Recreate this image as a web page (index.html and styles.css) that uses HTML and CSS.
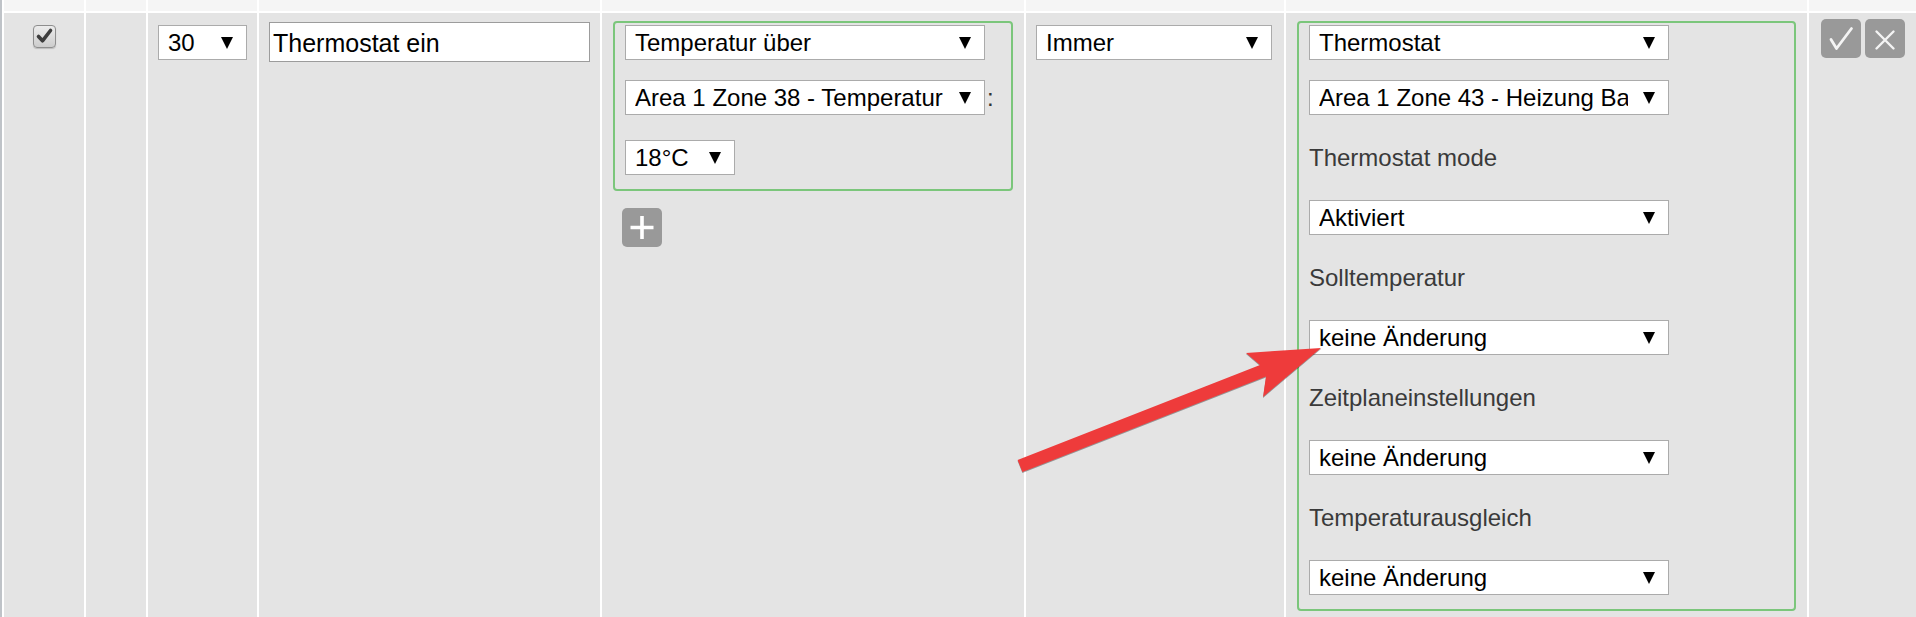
FILE: index.html
```html
<!DOCTYPE html>
<html lang="de">
<head>
<meta charset="utf-8">
<title>Regel bearbeiten</title>
<link rel="stylesheet" href="styles.css">
</head>
<body>
<div class="grid">
  <div class="hcell"></div>
  <div class="hcell"></div>
  <div class="hcell"></div>
  <div class="hcell"></div>
  <div class="hcell"></div>
  <div class="hcell"></div>
  <div class="hcell"></div>
  <div class="hcell"></div>

  <div class="cell cell-check">
    <span class="checkbox">
      <svg width="23" height="23" viewBox="0 0 23 23"><path d="M5.5 11.5 L9.5 15.8 L17.5 5.5" fill="none" stroke="#3d3d3d" stroke-width="3.6" stroke-linecap="round" stroke-linejoin="round"/></svg>
    </span>
  </div>
  <div class="cell"></div>
  <div class="cell cell-pad">
    <div class="select"><span class="val">30</span><span class="caret"></span></div>
  </div>
  <div class="cell cell-input">
    <input class="textin" type="text" value="Thermostat ein">
  </div>
  <div class="cell cell-box">
    <div class="box">
      <div class="select w360"><span class="val">Temperatur über</span><span class="caret"></span></div>
      <div class="line gap20">
        <div class="select w360"><span class="val">Area 1 Zone 38 - Temperatur</span><span class="caret"></span></div>
        <span class="colon">:</span>
      </div>
      <div class="select w110 gap25"><span class="val">18°C</span><span class="caret"></span></div>
    </div>
    <button class="btn plus" type="button">
      <svg width="40" height="39" viewBox="0 0 40 39"><path d="M20 8 V31 M8.5 19.5 H31.5" stroke="#fff" stroke-width="3.6"/></svg>
    </button>
  </div>
  <div class="cell cell-pad cell-when">
    <div class="select"><span class="val">Immer</span><span class="caret"></span></div>
  </div>
  <div class="cell cell-box">
    <div class="box">
      <div class="select w360"><span class="val">Thermostat</span><span class="caret"></span></div>
      <div class="select w360 gap20"><span class="val">Area 1 Zone 43 - Heizung Bad</span><span class="caret"></span></div>
      <div class="label">Thermostat mode</div>
      <div class="select w360"><span class="val">Aktiviert</span><span class="caret"></span></div>
      <div class="label">Solltemperatur</div>
      <div class="select w360"><span class="val">keine Änderung</span><span class="caret"></span></div>
      <div class="label">Zeitplaneinstellungen</div>
      <div class="select w360"><span class="val">keine Änderung</span><span class="caret"></span></div>
      <div class="label">Temperaturausgleich</div>
      <div class="select w360"><span class="val">keine Änderung</span><span class="caret"></span></div>
    </div>
  </div>
  <div class="cell cell-actions">
    <button class="btn" type="button">
      <svg width="40" height="39" viewBox="0 0 40 39"><path d="M10 20.5 L15.5 29.5 L30.5 9.5" fill="none" stroke="#f4f4f4" stroke-width="2.8" stroke-linecap="round" stroke-linejoin="round"/></svg>
    </button>
    <button class="btn" type="button">
      <svg width="40" height="39" viewBox="0 0 40 39"><path d="M11.5 12.5 L28.5 29.5 M28.5 12.5 L11.5 29.5" fill="none" stroke="#f4f4f4" stroke-width="2.4" stroke-linecap="round"/></svg>
    </button>
  </div>
</div>

<svg class="arrow" width="1916" height="617" viewBox="0 0 1916 617">
  <path d="M1017.6 459.9 L1260 365 L1246 353 L1321 348 L1263 397 L1266 376.6 L1022.4 472.1 Z" fill="#ee3b3b"/>
</svg>
</body>
</html>
```

FILE: styles.css
```css
html, body {
  margin: 0;
  padding: 0;
  overflow: hidden;
  background: #fff;
}

body {
  font-family: "Liberation Sans", Arial, sans-serif;
  font-size: 24px;
  color: #000;
}

.grid {
  display: grid;
  grid-template-columns: 80px 60px 109px 341px 422px 258px 521px 1fr;
  grid-template-rows: 11px 1fr;
  gap: 2px;
  height: 617px;
  box-sizing: border-box;
  border-left: 2px solid #bfc3c8;
  padding-left: 2px;
  background: #fff;
}

.hcell {
  background: #f5f5f5;
}

.cell {
  background: #e4e4e4;
  box-sizing: border-box;
  min-width: 0;
}

.cell-check {
  display: flex;
  justify-content: center;
  align-items: flex-start;
  padding-top: 12px;
}

.checkbox {
  display: block;
  width: 23px;
  height: 23px;
  box-sizing: border-box;
  border: 1px solid #8e8e8e;
  border-radius: 4px;
  background: linear-gradient(#ececec, #cdcdcd);
  box-shadow: 0 1px 1px rgba(0, 0, 0, 0.18);
  position: relative;
}

.checkbox svg {
  position: absolute;
  left: -1px;
  top: -1px;
}

.cell-pad {
  padding: 12px 10px 0 10px;
}

.cell-when {
  padding-right: 12px;
}

.cell-input {
  padding: 9px 10px 0 10px;
}

.textin {
  display: block;
  width: 100%;
  height: 40px;
  box-sizing: border-box;
  margin: 0;
  border: 1px solid #9c9c9c;
  border-radius: 0;
  background: #fff;
  padding: 2px 3px 0 3px;
  font-family: "Liberation Sans", Arial, sans-serif;
  font-size: 25px;
  color: #000;
  outline: none;
}

.cell-box {
  padding: 8px 11px 0 11px;
}

.box {
  border: 2px solid #7bc67b;
  border-radius: 4px;
  padding: 2px 10px 14px 10px;
}

.select {
  display: flex;
  align-items: center;
  height: 35px;
  box-sizing: border-box;
  border: 1px solid #ababab;
  background: #fff;
  padding: 1px 13px 0 9px;
  color: #000;
}

.w360 {
  width: 360px;
}

.w110 {
  width: 110px;
}

.val {
  flex: 1;
  min-width: 0;
  overflow: hidden;
  white-space: nowrap;
  line-height: normal;
}

.caret {
  flex: none;
  width: 0;
  height: 0;
  margin-left: 15px;
  border-left: 6px solid transparent;
  border-right: 6px solid transparent;
  border-top: 12px solid #000;
}

.gap20 {
  margin-top: 20px;
}

.gap25 {
  margin-top: 25px;
}

.line {
  display: flex;
  align-items: center;
}

.colon {
  margin-left: 2px;
  color: #333;
}

.label {
  margin: 20px 0;
  line-height: 45px;
  color: #3a3a3a;
  white-space: nowrap;
}

.btn {
  display: block;
  width: 40px;
  height: 39px;
  padding: 0;
  margin: 0;
  border: none;
  border-radius: 5px;
  background: #999;
}

.btn svg {
  display: block;
}

.plus {
  margin: 17px 0 0 9px;
}

.cell-actions {
  display: flex;
  align-items: flex-start;
  gap: 4px;
  padding: 6px 0 0 12px;
}

.arrow {
  position: absolute;
  left: 0;
  top: 0;
  pointer-events: none;
  filter: drop-shadow(0.6px 1px 0.6px rgba(0, 0, 0, 0.35));
}
```
